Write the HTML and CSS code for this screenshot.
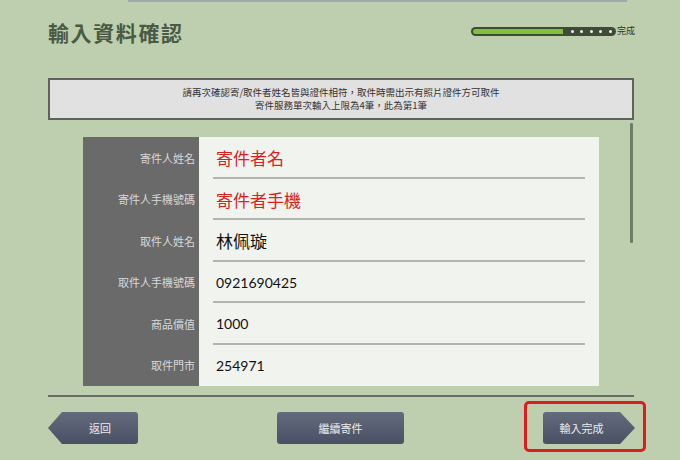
FILE: index.html
```html
<!DOCTYPE html>
<html lang="zh-Hant">
<head>
<meta charset="utf-8">
<title>輸入資料確認</title>
<link rel="stylesheet" href="styles.css">
</head>
<body>
<div class="page">
  <div class="topline"></div>
  <header class="header">
    <h1 class="title">輸入資料確認</h1>
    <div class="progress">
      <div class="track">
        <div class="fill"></div>
        <div class="dots"><span></span><span></span><span></span><span></span><span></span></div>
      </div>
      <span class="progress-label">完成</span>
    </div>
  </header>
  <div class="notice">
    <p>請再次確認寄/取件者姓名皆與證件相符，取件時需出示有照片證件方可取件</p>
    <p>寄件服務單次輸入上限為4筆，此為第1筆</p>
  </div>
  <div class="scroll-area">
    <div class="table">
      <div class="row"><div class="label">寄件人姓名</div><div class="value"><div class="value-inner red">寄件者名</div></div></div>
      <div class="row"><div class="label">寄件人手機號碼</div><div class="value"><div class="value-inner red">寄件者手機</div></div></div>
      <div class="row"><div class="label">取件人姓名</div><div class="value"><div class="value-inner">林佩璇</div></div></div>
      <div class="row"><div class="label">取件人手機號碼</div><div class="value"><div class="value-inner num">0921690425</div></div></div>
      <div class="row"><div class="label">商品價值</div><div class="value"><div class="value-inner num">1000</div></div></div>
      <div class="row last"><div class="label">取件門市</div><div class="value"><div class="value-inner num">254971</div></div></div>
    </div>
    <div class="scrollbar"></div>
  </div>
  <div class="bottomline"></div>
  <div class="actions">
    <button class="btn btn-back">返回</button>
    <button class="btn btn-mid">繼續寄件</button>
    <div class="highlight">
      <button class="btn btn-next">輸入完成</button>
    </div>
  </div>
</div>
</body>
</html>
```
FILE: styles.css
```css
* { box-sizing: border-box; }
html, body {
  margin: 0;
  padding: 0;
  background: #bdcfae;
}
body {
  font-family: "Noto Sans CJK TC", "Noto Sans", sans-serif;
  width: 680px;
  height: 460px;
  overflow: hidden;
}
.page {
  padding: 0 46px 0 48px;
  display: flex;
  flex-direction: column;
}
.topline {
  margin-left: 80px;
  width: 499px;
  height: 2px;
  background: #9eabae;
}
.header {
  height: 76px;
  display: flex;
  justify-content: space-between;
  align-items: flex-start;
}
.title {
  margin: 17px 0 0 0;
  font-size: 21px;
  line-height: 26px;
  font-weight: bold;
  color: #4b5a45;
  letter-spacing: 1.6px;
}
.progress {
  margin-top: 24px;
  display: flex;
  align-items: center;
  margin-right: -1px;
}
.track {
  width: 145px;
  height: 9px;
  border-radius: 5px;
  background: #3f4a39;
  display: flex;
  align-items: center;
  padding: 0 3px 0 2px;
}
.fill {
  width: 90px;
  height: 5px;
  border-radius: 3px 0 0 3px;
  background: #80c03a;
}
.dots {
  flex: 1;
  display: flex;
  justify-content: space-between;
  padding: 0 1px 0 8px;
}
.dots span {
  width: 3px;
  height: 3px;
  border-radius: 50%;
  background: #f2f2f2;
}
.progress-label {
  font-size: 9px;
  color: #333;
  margin-left: 1px;
  line-height: 10px;
}
.notice {
  height: 42px;
  border: 2px solid #5f625c;
  background: #e1e1e1;
  display: flex;
  flex-direction: column;
  justify-content: center;
  align-items: center;
  padding-bottom: 1px;
}
.notice p {
  margin: 0;
  font-size: 9.5px;
  line-height: 13px;
  color: #333;
}
.scroll-area {
  height: 275px;
  display: flex;
  align-items: flex-start;
}
.table {
  margin: 17px 0 0 35px;
  width: 516px;
  flex-shrink: 0;
  display: flex;
  flex-direction: column;
}
.row {
  height: 41.5px;
  display: flex;
}
.label {
  width: 116px;
  background: #6a6a6a;
  color: #d9d9d9;
  font-size: 11px;
  text-align: right;
  padding-right: 4px;
  display: flex;
  align-items: center;
  justify-content: flex-end;
}
.value {
  flex: 1;
  background: #f0f3ee;
  padding: 0 14px;
  display: flex;
}
.value-inner {
  flex: 1;
  border-bottom: 2px solid #b2b5ad;
  display: flex;
  align-items: center;
  padding: 2px 0 0 3px;
  font-family: "Noto Sans CJK TC", sans-serif;
  font-size: 17px;
  font-weight: 400;
  color: #111;
}
.value-inner.num {
  font-family: "Lato", sans-serif;
  font-size: 14px;
  font-weight: 400;
}
.row.last .value-inner { border-bottom: none; padding-top: 0; }
.value-inner.red { color: #e0201c; }
.scrollbar {
  margin: 3px 1px 0 auto;
  width: 3px;
  height: 120px;
  border-radius: 1px;
  background: #6d7d66;
  flex-shrink: 0;
}
.bottomline {
  height: 2px;
  background: #6b6e66;
}
.actions {
  display: flex;
  align-items: flex-start;
  padding-top: 4px;
}
.btn {
  position: relative;
  flex-shrink: 0;
  height: 32px;
  border: none;
  border-radius: 3px;
  background: linear-gradient(#646b7c, #4a5064);
  color: #ececec;
  font-family: "Noto Sans CJK TC", sans-serif;
  font-size: 11px;
  padding: 0;
  margin: 0;
}
.btn-back {
  margin: 11px 0 0 14px;
  width: 76px;
  border-radius: 0 3px 3px 0;
}
.btn-back::before {
  content: "";
  position: absolute;
  left: -14px;
  top: 0;
  width: 14px;
  height: 32px;
  background: linear-gradient(#646b7c, #4a5064);
  clip-path: polygon(100% 0, 0 50%, 100% 100%);
}
.btn-mid {
  margin: 11px 0 0 139px;
  width: 127px;
}
.highlight {
  flex-shrink: 0;
  margin: 0 0 0 120px;
  width: 122px;
  height: 51px;
  border: 3px solid #e01b1b;
  border-radius: 5px;
  padding: 8px 0 0 16px;
}
.btn-next {
  width: 77px;
  border-radius: 3px 0 0 3px;
}
.btn-next::after {
  content: "";
  position: absolute;
  right: -15px;
  top: 0;
  width: 15px;
  height: 32px;
  background: linear-gradient(#646b7c, #4a5064);
  clip-path: polygon(0 0, 100% 50%, 0 100%);
}
```
